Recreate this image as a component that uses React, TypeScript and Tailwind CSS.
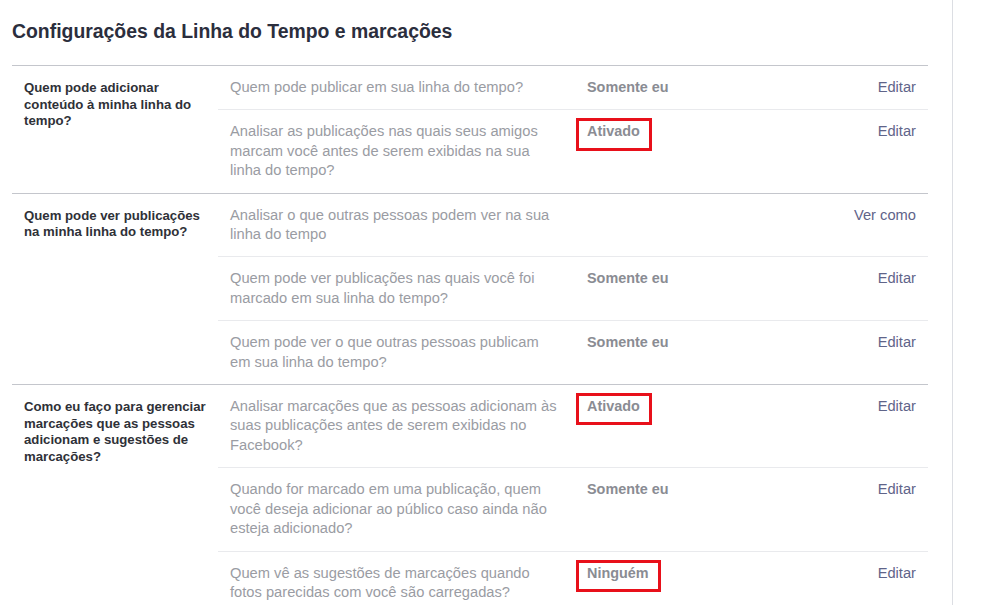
import React from 'react';

type Row = {
  lines: string[];
  value?: string;
  action: string;
  marked?: boolean;
};

type Section = {
  title: string[];
  rows: Row[];
};

const sections: Section[] = [
  {
    title: ['Quem pode adicionar', 'conteúdo à minha linha do', 'tempo?'],
    rows: [
      { lines: ['Quem pode publicar em sua linha do tempo?'], value: 'Somente eu', action: 'Editar' },
      {
        lines: [
          'Analisar as publicações nas quais seus amigos',
          'marcam você antes de serem exibidas na sua',
          'linha do tempo?',
        ],
        value: 'Ativado',
        action: 'Editar',
        marked: true,
      },
    ],
  },
  {
    title: ['Quem pode ver publicações', 'na minha linha do tempo?'],
    rows: [
      { lines: ['Analisar o que outras pessoas podem ver na sua', 'linha do tempo'], action: 'Ver como' },
      {
        lines: ['Quem pode ver publicações nas quais você foi', 'marcado em sua linha do tempo?'],
        value: 'Somente eu',
        action: 'Editar',
      },
      {
        lines: ['Quem pode ver o que outras pessoas publicam', 'em sua linha do tempo?'],
        value: 'Somente eu',
        action: 'Editar',
      },
    ],
  },
  {
    title: ['Como eu faço para gerenciar', 'marcações que as pessoas', 'adicionam e sugestões de', 'marcações?'],
    rows: [
      {
        lines: [
          'Analisar marcações que as pessoas adicionam às',
          'suas publicações antes de serem exibidas no',
          'Facebook?',
        ],
        value: 'Ativado',
        action: 'Editar',
        marked: true,
      },
      {
        lines: [
          'Quando for marcado em uma publicação, quem',
          'você deseja adicionar ao público caso ainda não',
          'esteja adicionado?',
        ],
        value: 'Somente eu',
        action: 'Editar',
      },
      {
        lines: ['Quem vê as sugestões de marcações quando', 'fotos parecidas com você são carregadas?'],
        value: 'Ninguém',
        action: 'Editar',
        marked: true,
      },
    ],
  },
];

function SettingRow({ row, first }: { row: Row; first: boolean }) {
  return (
    <div className={`flex py-3 px-3 text-[14.7px] leading-[19.4px] ${first ? '' : 'border-t border-[#e9eaed]'}`}>
      <div className="w-[357px] shrink-0 whitespace-nowrap text-[#9a9ca3]">
        {row.lines.map((line) => (
          <div key={line}>{line}</div>
        ))}
      </div>
      <div className="w-[200px] shrink-0">
        {row.value && (
          <span className="relative inline-block font-bold text-[#8a8c93] text-[14.4px]">
            {row.value}
            {row.marked && (
              <span className="absolute -left-[11px] -right-[12px] -top-[4px] -bottom-[9px] border-[3px] border-[#e8101a]" />
            )}
          </span>
        )}
      </div>
      <div className="flex-1 text-right text-[#5f6489]">{row.action}</div>
    </div>
  );
}

export default function App() {
  return (
    <div className="flex h-[605px] w-[984px] overflow-hidden bg-white" style={{ fontFamily: '"Liberation Sans", Arial, sans-serif' }}>
      <div className="w-[953px] shrink-0 border-r border-[#dcdee3] pl-3">
        <h1 className="pt-[19px] pb-[22px] text-[19.4px] leading-6 font-bold text-[#2b2e3d]">
          Configurações da Linha do Tempo e marcações
        </h1>
        <div className="w-[916px]">
          {sections.map((section) => (
            <div key={section.title.join(' ')} className="flex border-t border-[#c4c6cc]">
              <div className="w-[206px] shrink-0 pt-[14px] pl-3 text-[13.2px] leading-[16.5px] font-bold text-[#2f3138]">
                {section.title.map((line) => (
                  <div key={line}>{line}</div>
                ))}
              </div>
              <div className="flex-1">
                {section.rows.map((row, i) => (
                  <SettingRow key={row.lines.join(' ')} row={row} first={i === 0} />
                ))}
              </div>
            </div>
          ))}
        </div>
      </div>
    </div>
  );
}
